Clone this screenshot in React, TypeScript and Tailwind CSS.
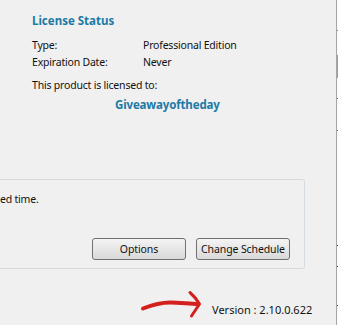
const font = { fontFamily: '"Noto Sans", "Open Sans", sans-serif' };

const Row = ({ label, value }: { label: string; value: string }) => (
  <div className="flex h-[17px] items-center leading-[17px]">
    <span className="w-[111px]">{label}</span>
    <span>{value}</span>
  </div>
);

// hand drawn red arrow pointing at the version label
const Arrow = () => (
  <svg width="64" height="30" viewBox="0 0 64 30" className="shrink-0">
    <path
      d="M3 19.5 C 12 16, 20 13.5, 30 13.5 C 40 13.5, 50 15, 58 15"
      fill="none"
      stroke="#d41f1f"
      strokeWidth="4"
      strokeLinecap="round"
    />
    <path
      d="M50 3.5 C 54 7, 57 11, 59.5 15 C 57 19, 54 23, 51.5 27"
      fill="none"
      stroke="#d41f1f"
      strokeWidth="3"
      strokeLinecap="round"
      strokeLinejoin="round"
    />
  </svg>
);

const btn =
  "h-[22px] w-[94px] whitespace-nowrap rounded-[3px] border border-[#707070] bg-gradient-to-b from-[#f4f4f4] to-[#d9d9d9] text-[10.5px] leading-[20px] tracking-[-0.1px] text-[#111]";

export default function App() {
  return (
    <div
      className="flex h-[325px] w-[338px] overflow-hidden bg-[#f0f0f0] text-[10.5px] tracking-[-0.2px] text-[#111]"
      style={font}
    >
      <div className="flex w-[336px] flex-col">
        <section className="pl-[32px] pt-[13px]">
          <h2 className="h-[16px] text-[11.5px] font-bold leading-[16px] tracking-normal text-[#1d7aa6]">
            License Status
          </h2>
          <div className="mt-[8px]">
            <Row label="Type:" value="Professional Edition" />
            <Row label="Expiration Date:" value="Never" />
          </div>
          <p className="mt-[6px] h-[17px] leading-[17px]">This product is licensed to:</p>
          <p className="mt-[2px] h-[17px] pl-[83px] text-[11.5px] font-bold leading-[17px] tracking-[-0.15px] text-[#1d7aa6]">
            Giveawayoftheday
          </p>
        </section>

        <div className="mt-[66px] h-[90px] w-[305px] rounded-tr-[3px] rounded-br-[3px] border border-l-0 border-[#d3dbe0] pt-[11px]">
          <p className="h-[17px] leading-[17px]">ed time.</p>
          <div className="mt-[30px] flex justify-end gap-[10px] pr-[14px]">
            <button className={btn}>Options</button>
            <button className={btn}>Change Schedule</button>
          </div>
        </div>

        <div className="mt-[20px] flex items-end pl-[140px]">
          <Arrow />
          <span className="mb-[1px] ml-[8px] text-[11px] leading-[17px] tracking-normal">
            Version : 2.10.0.622
          </span>
        </div>
      </div>

      <div className="relative w-[2px] border-l border-[#a6a6a6] bg-[#fafafa]">
        <div className="absolute left-0 top-[30px] h-[1px] w-[2px] bg-[#888]" />
        <div className="absolute left-0 top-[55px] h-[23px] w-[2px] bg-[#7fa6c4]" />
        <div className="absolute left-0 top-[98px] h-[1px] w-[2px] bg-[#2a6fb0]" />
        <div className="absolute left-0 top-[130px] h-[1px] w-[2px] bg-[#2a6fb0]" />
        <div className="absolute left-0 top-[245px] h-[1px] w-[2px] bg-[#444]" />
        <div className="absolute left-0 top-[266px] h-[1px] w-[2px] bg-[#444]" />
        <div className="absolute left-0 top-[305px] h-[1px] w-[2px] bg-[#444]" />
      </div>
    </div>
  );
}
